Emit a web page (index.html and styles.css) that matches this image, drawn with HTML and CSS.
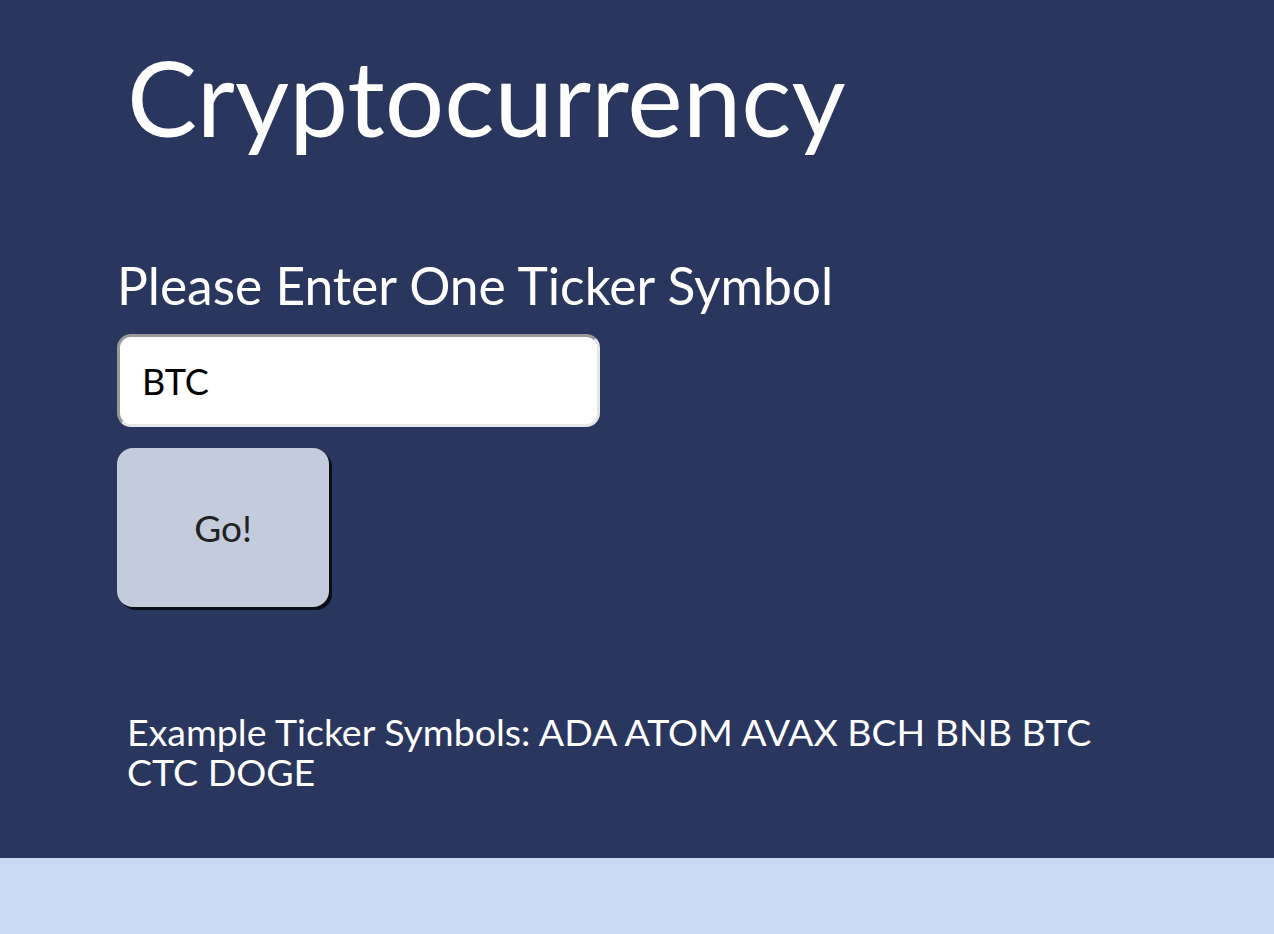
FILE: index.html
```html
<!DOCTYPE html>
<html lang="en">
<head>
<meta charset="utf-8">
<title>Cryptocurrency</title>
<link rel="stylesheet" href="styles.css">
</head>
<body>
<main class="page">
  <h1 class="title">Cryptocurrency</h1>
  <form class="ticker-form">
    <label class="ticker-label" for="ticker">Please Enter One Ticker Symbol</label>
    <input class="ticker-input" id="ticker" type="text" value="BTC">
    <button class="go-button" type="button">Go!</button>
  </form>
  <p class="examples">Example Ticker Symbols: ADA ATOM AVAX BCH BNB BTC CTC DOGE</p>
</main>
</body>
</html>
```
FILE: styles.css
```css
html {
  background: #cdd9f2;
}
body {
  margin: 0;
  background: #29365e;
  font-family: Lato, "Open Sans", sans-serif;
  color: #ffffff;
}
.page {
  padding: 36px 117px 66px;
}
.title {
  margin: 0 0 0 10px;
  font-size: 105px;
  font-weight: 400;
  line-height: 120px;
}
.ticker-form {
  display: flex;
  flex-direction: column;
  align-items: flex-start;
  margin-top: 99px;
}
.ticker-label {
  font-size: 51.5px;
  line-height: 60px;
}
.ticker-input {
  margin-top: 19px;
  box-sizing: border-box;
  width: 483px;
  height: 93px;
  border-style: solid;
  border-width: 3px;
  border-color: #999999 #e6e6e6 #e6e6e6 #999999;
  border-radius: 14px;
  padding: 0 22px;
  font-family: Lato, sans-serif;
  font-size: 36px;
  color: #000;
  background: #fff;
}
.go-button {
  margin-top: 21px;
  width: 212px;
  height: 159px;
  border: none;
  border-radius: 16px;
  background: #c4cbdc;
  box-shadow: 3px 3px 0 #0b0d14;
  font-family: Lato, sans-serif;
  font-size: 37px;
  color: #222;
}
.examples {
  margin: 105px 0 0 10px;
  max-width: 990px;
  font-size: 37.5px;
  line-height: 40px;
}
```
